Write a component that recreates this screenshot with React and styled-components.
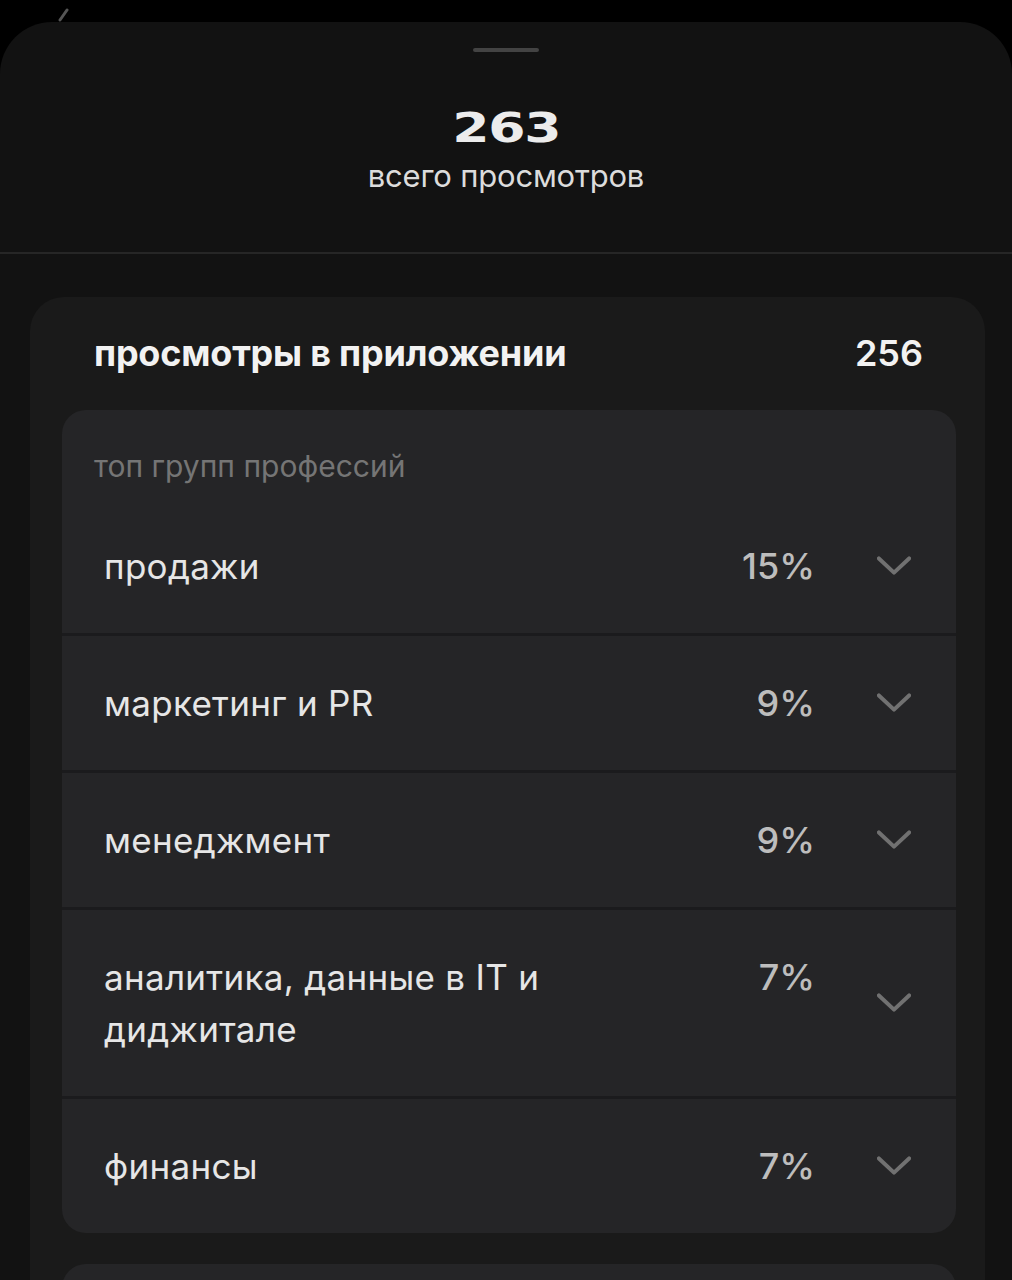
import React from "react";
import styled, { createGlobalStyle } from "styled-components";

const Global = createGlobalStyle`
  html, body { margin: 0; padding: 0; background: #000; }
  body { font-family: Inter, "Noto Sans", sans-serif; -webkit-font-smoothing: antialiased; }
  * { box-sizing: border-box; }
`;

const Page = styled.div`
  width: 1012px;
  height: 1280px;
  overflow: hidden;
  background: #000;
  display: flex;
  flex-direction: column;
`;

const TopStrip = styled.div`
  height: 22px;
  flex-shrink: 0;
  padding-left: 58px;
  padding-top: 8px;
  display: flex;
  align-items: flex-start;
`;

const Sheet = styled.div`
  flex: 1;
  background: #121212;
  border-radius: 52px 52px 0 0;
  display: flex;
  flex-direction: column;
`;

const Header = styled.header`
  display: flex;
  flex-direction: column;
  align-items: center;
  padding-top: 26px;
  height: 232px;
  border-bottom: 2px solid #262626;
`;

const Handle = styled.div`
  width: 66px;
  height: 4px;
  border-radius: 2px;
  background: #434343;
`;

const Total = styled.div`
  margin-top: 52px;
  font-family: "DejaVu Sans", sans-serif;
  font-weight: 700;
  font-size: 40px;
  line-height: 48px;
  color: #ececec;
  transform: scaleX(1.34);
  letter-spacing: -1px;
`;

const TotalLabel = styled.div`
  margin-top: 6px;
  font-size: 31px;
  line-height: 36px;
  color: #dcdcdc;
  letter-spacing: -0.2px;
`;

const Body = styled.div`
  padding: 43px 27px 0 30px;
`;

const Card = styled.section`
  background: #1a1a1a;
  border-radius: 34px 34px 0 0;
  padding: 0 29px 0 32px;
  display: flex;
  flex-direction: column;
`;

const CardHead = styled.div`
  display: flex;
  align-items: center;
  justify-content: space-between;
  height: 113px;
  padding: 0 33px 2px 32px;
`;

const CardTitle = styled.h2`
  margin: 0;
  font-size: 36px;
  font-weight: 700;
  color: #f2f2f2;
  letter-spacing: -0.2px;
`;

const CardCount = styled.span`
  font-size: 36px;
  font-weight: 600;
  color: #f2f2f2;
`;

const Inner = styled.div`
  background: #252527;
  border-radius: 24px;
  overflow: hidden;
  display: flex;
  flex-direction: column;
  margin-bottom: 31px;
  min-height: ${(p) => p.$h || 0}px;
`;

const InnerTitle = styled.div`
  padding: 40px 32px 17px;
  font-size: 30px;
  line-height: 32px;
  color: #757575;
`;

const Row = styled.div`
  display: grid;
  grid-template-columns: 1fr auto 34px;
  column-gap: 62px;
  align-items: ${(p) => (p.$multi ? "start" : "center")};
  padding: 41px 45px 41px 42px;
  border-top: ${(p) => (p.$first ? "none" : "3px solid #1b1b1d")};
`;

const RowLabel = styled.div`
  font-size: 35px;
  line-height: 52px;
  color: #e6e6e6;
  letter-spacing: 0.3px;
  max-width: 470px;
`;

const RowPct = styled.div`
  font-size: 36px;
  line-height: 52px;
  font-weight: 500;
  color: #bdbdbd;
  text-align: right;
`;

const Chevron = styled.div`
  display: flex;
  justify-content: center;
  align-self: center;
`;

const Chev = () => (
  <svg width="36" height="20" viewBox="0 0 36 20" fill="none">
    <path d="M2 2 L18 17 L34 2" stroke="#717171" strokeWidth="4.2" strokeLinecap="round" strokeLinejoin="round" />
  </svg>
);

const rows = [
  { label: "продажи", pct: "15%" },
  { label: "маркетинг и PR", pct: "9%" },
  { label: "менеджмент", pct: "9%" },
  { label: "аналитика, данные в IT и диджитале", pct: "7%", multi: true },
  { label: "финансы", pct: "7%" },
];

export default function App() {
  return (
    <Page>
      <Global />
      <TopStrip>
        <svg width="14" height="14" viewBox="0 0 14 14">
          <path d="M2 12 L9 2" stroke="#555" strokeWidth="3" strokeLinecap="round" />
        </svg>
      </TopStrip>
      <Sheet>
        <Header>
          <Handle />
          <Total>263</Total>
          <TotalLabel>всего просмотров</TotalLabel>
        </Header>
        <Body>
          <Card>
            <CardHead>
              <CardTitle>просмотры в приложении</CardTitle>
              <CardCount>256</CardCount>
            </CardHead>
            <Inner>
              <InnerTitle>топ групп профессий</InnerTitle>
              {rows.map((r, i) => (
                <Row key={r.label} $first={i === 0} $multi={r.multi}>
                  <RowLabel>{r.label}</RowLabel>
                  <RowPct>{r.pct}</RowPct>
                  <Chevron><Chev /></Chevron>
                </Row>
              ))}
            </Inner>
            <Inner $h={120} />
          </Card>
        </Body>
      </Sheet>
    </Page>
  );
}
